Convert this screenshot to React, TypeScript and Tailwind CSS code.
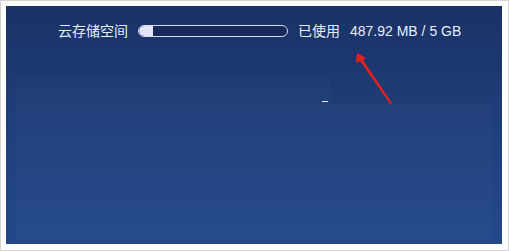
export default function App() {
  return (
    <div className="w-[509px] h-[251px] bg-white border border-[#d4d4d4] pt-[5px] pl-[5px] pr-[6px] pb-[6px] flex">
      <div
        className="relative flex-1 flex flex-col bg-gradient-to-b from-[#1a3166] via-[#1f3f7b] to-[#23488b] text-[#e8eef8]"
        style={{ fontFamily: '"Liberation Sans", "Noto Sans CJK SC", sans-serif' }}
      >
        {/* storage row */}
        <div className="flex items-center h-[20px] mt-[15px] pl-[52px] text-[14px] leading-[20px]">
          <span>云存储空间</span>
          <div className="ml-[10px] w-[150px] h-[12px] rounded-full border border-[#cfdcf2] bg-[#16295a] overflow-hidden">
            <div className="h-full w-[14px] rounded-l-full bg-[#e4e4f6]" />
          </div>
          <span className="ml-[10px]">已使用</span>
          <span className="ml-[10px]">487.92 MB / 5 GB</span>
        </div>

        {/* faint panels behind */}
        <div className="mt-[34px] ml-[9px] w-[315px] h-[28px] bg-white/[0.015]" />
        <div className="ml-[9px] w-[477px] flex-1 mb-[3px] bg-white/[0.02]" />

        {/* small white dash */}
        <div className="absolute left-[316px] top-[95px] w-[6px] h-[1px] bg-white/90" />

        {/* red annotation arrow */}
        <svg className="absolute left-[346px] top-[42px]" width="44" height="60" viewBox="0 0 44 60">
          <polygon points="5,5 14,10 11,12 40,55 38,56 8,13 4,15" fill="#e3201b" />
        </svg>
      </div>
    </div>
  )
}
